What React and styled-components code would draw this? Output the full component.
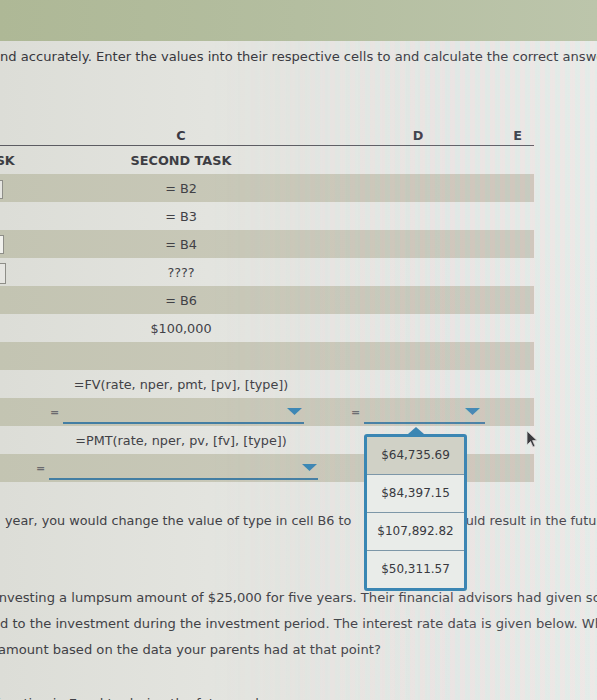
import React from 'react';
import styled, { createGlobalStyle } from 'styled-components';

const GlobalStyle = createGlobalStyle`
  html, body { margin: 0; padding: 0; }
  body {
    background: #e4e5e0;
    overflow: hidden;
    font-family: "DejaVu Sans", Verdana, sans-serif;
  }
`;

const Page = styled.div`
  position: relative;
  width: 597px;
  height: 700px;
  overflow: hidden;
  background: linear-gradient(90deg, #dcddd7 0%, #e3e4df 35%, #e8e9e5 70%, #eceeea 100%);
  color: #414146;
  font-size: 12.8px;
  &::after {
    content: "";
    position: absolute;
    left: 0;
    right: 0;
    top: 41px;
    bottom: 0;
    pointer-events: none;
    background: repeating-linear-gradient(90deg, rgba(255, 170, 200, 0.08) 0 5px, rgba(140, 215, 225, 0.08) 5px 10px);
    -webkit-mask-image: linear-gradient(90deg, transparent 35%, #000 75%);
    mask-image: linear-gradient(90deg, transparent 35%, #000 75%);
  }
`;

const TopBar = styled.div`
  height: 41px;
  background: linear-gradient(90deg, #aeb896 0%, #b4bea0 50%, #bcc5ab 100%);
`;

const Line = styled.div`
  white-space: nowrap;
  height: ${p => p.$h || 18}px;
  line-height: ${p => p.$h || 18}px;
  margin-top: ${p => p.$mt || 0}px;
  margin-left: ${p => p.$shift || 0}px;
  font-size: ${p => p.$size || 12.8}px;
  color: ${p => p.$dark ? '#37373d' : 'inherit'};
`;

const Paragraph = styled.div`
  margin-top: ${p => p.$mt || 0}px;
`;

const Sheet = styled.div`
  width: 534px;
  margin-top: 59px;
`;

const Grid = styled.div`
  display: grid;
  grid-template-columns: 56px 250px 50px 124px 54px;
  align-items: center;
`;

const LetterRow = styled(Grid)`
  height: 20px;
  border-bottom: 1px solid #5c5c62;
  font-weight: bold;
  color: #3a3a44;
`;

const Row = styled(Grid)`
  height: 28px;
  font-weight: ${p => p.$bold ? 'bold' : 'normal'};
  color: ${p => p.$bold ? '#3e3e44' : 'inherit'};
  background: ${p => p.$shade
    ? 'linear-gradient(90deg, #c3c4b2 0%, #c8c8b8 45%, #cdcabd 100%)'
    : 'transparent'};
`;

const Cell = styled.div`
  grid-column: ${p => p.$col};
  text-align: ${p => p.$align || 'center'};
  padding-right: ${p => p.$pr || 0}px;
  white-space: nowrap;
`;

const Shifted = styled.span`
  display: inline-block;
  margin-left: ${p => p.$shift}px;
`;

const StubCell = styled.div`
  grid-column: 1;
  height: 100%;
  display: flex;
  align-items: flex-start;
`;

const InputStub = styled.div`
  box-sizing: border-box;
  width: 40px;
  height: ${p => p.$h}px;
  margin-top: ${p => p.$top}px;
  margin-left: ${p => p.$w - 40}px;
  background: ${p => p.$bg};
  border: 1px solid #8e8e88;
`;

const SelectCell = styled.div`
  grid-column: ${p => p.$col};
  display: flex;
  align-items: center;
  height: 100%;
  padding: 0 ${p => p.$pr}px 0 ${p => p.$pl}px;
`;

const Eq = styled.span`
  flex: none;
  width: 9px;
  margin-right: 4px;
  font-size: 11px;
  font-weight: bold;
  color: #6a6a6e;
`;

const Select = styled.div`
  position: relative;
  flex: 1;
  height: 21px;
  border-bottom: 2px solid #437ea3;
  display: flex;
  align-items: center;
  justify-content: flex-end;
  padding-right: ${p => p.$ar}px;
`;

const Popup = styled.div`
  position: absolute;
  left: 0;
  top: calc(100% + 12px);
  width: 103px;
  box-sizing: border-box;
  border: 3px solid #3b86b3;
  border-radius: 3px;
  background: #e9ece9;
  z-index: 5;
  &::before {
    content: "";
    position: absolute;
    top: -10px;
    left: 50%;
    transform: translateX(-50%);
    border-left: 8px solid transparent;
    border-right: 8px solid transparent;
    border-bottom: 7px solid #3b86b3;
  }
`;

const PopItem = styled.div`
  height: 37px;
  display: flex;
  align-items: center;
  justify-content: center;
  font-size: 12px;
  color: #38393f;
  background: ${p => p.$active ? '#d0d1c6' : 'transparent'};
  & + & {
    border-top: 1px solid #7d97a8;
  }
`;

const Blank = styled.span`
  display: inline-block;
  width: 88px;
  height: 1px;
  margin: 0 4px;
`;

const Cursor = styled.svg`
  position: absolute;
  left: 526px;
  top: 430px;
  z-index: 6;
`;

const Arrow = () => (
  <svg width="15" height="7" viewBox="0 0 15 7">
    <polygon points="0,0 15,0 7.5,7" fill="#3a86b4" />
  </svg>
);

const values = ['$64,735.69', '$84,397.15', '$107,892.82', '$50,311.57'];

export default function App() {
  return (
    <>
      <GlobalStyle />
      <Page>
        <TopBar />
        <Line $mt={7} $shift={-8} $size={13.1} $dark>
          and accurately. Enter the values into their respective cells to and calculate the correct answers below.
        </Line>

        <Sheet>
          <LetterRow>
            <Cell $col="2">C</Cell>
            <Cell $col="4">D</Cell>
            <Cell $col="5" $align="right" $pr={12}>E</Cell>
          </LetterRow>

          <Row $bold>
            <Cell $col="1" $align="left"><Shifted $shift={-22}>TASK</Shifted></Cell>
            <Cell $col="2">SECOND TASK</Cell>
          </Row>

          <Row $shade>
            <StubCell><InputStub $w={3} $top={6} $h={19} $bg="#e6e6e2" /></StubCell>
            <Cell $col="2">= B2</Cell>
          </Row>
          <Row>
            <Cell $col="2">= B3</Cell>
          </Row>
          <Row $shade>
            <StubCell><InputStub $w={4} $top={5} $h={19} $bg="#f1f1ed" /></StubCell>
            <Cell $col="2">= B4</Cell>
          </Row>
          <Row>
            <StubCell><InputStub $w={6} $top={5} $h={21} $bg="#e6e6e2" /></StubCell>
            <Cell $col="2">????</Cell>
          </Row>
          <Row $shade>
            <Cell $col="2">= B6</Cell>
          </Row>
          <Row>
            <Cell $col="2">$100,000</Cell>
          </Row>
          <Row $shade />
          <Row>
            <Cell $col="2">=FV(rate, nper, pmt, [pv], [type])</Cell>
          </Row>
          <Row $shade>
            <SelectCell $col="1 / 3" $pl={50} $pr={2}>
              <Eq>=</Eq>
              <Select $ar={2}><Arrow /></Select>
            </SelectCell>
            <SelectCell $col="3 / 6" $pl={45} $pr={49}>
              <Eq>=</Eq>
              <Select $ar={5}>
                <Arrow />
                <Popup>
                  {values.map((v, i) => (
                    <PopItem key={v} $active={i === 0}>{v}</PopItem>
                  ))}
                </Popup>
              </Select>
            </SelectCell>
          </Row>
          <Row>
            <Cell $col="2">=PMT(rate, nper, pv, [fv], [type])</Cell>
          </Row>
          <Row $shade>
            <SelectCell $col="1 / 4" $pl={36} $pr={38}>
              <Eq>=</Eq>
              <Select $ar={1}><Arrow /></Select>
            </SelectCell>
          </Row>
        </Sheet>

        <Line $mt={30} $shift={5}>
          year, you would change the value of type in cell B6 to<Blank />would result in the future value of
        </Line>

        <Paragraph $mt={55}>
          <Line $h={26} $shift={-5} $size={13.1}>investing a lumpsum amount of $25,000 for five years. Their financial advisors had given some</Line>
          <Line $h={26} $size={13.1}>d to the investment during the investment period. The interest rate data is given below. What</Line>
          <Line $h={26} $shift={-2} $size={13.1}>amount based on the data your parents had at that point?</Line>
        </Paragraph>

        <Line $h={26} $mt={28} $shift={-5} $size={13.1}>function in Excel to derive the future value</Line>

        <Cursor width="12" height="18" viewBox="0 0 12 18">
          <path d="M1 1 L1 15 L4.5 11.5 L7 17 L9 16 L6.6 10.6 L11 10.6 Z" fill="#3b3b3f" stroke="#d8d8d8" strokeWidth="0.8" />
        </Cursor>
      </Page>
    </>
  );
}
